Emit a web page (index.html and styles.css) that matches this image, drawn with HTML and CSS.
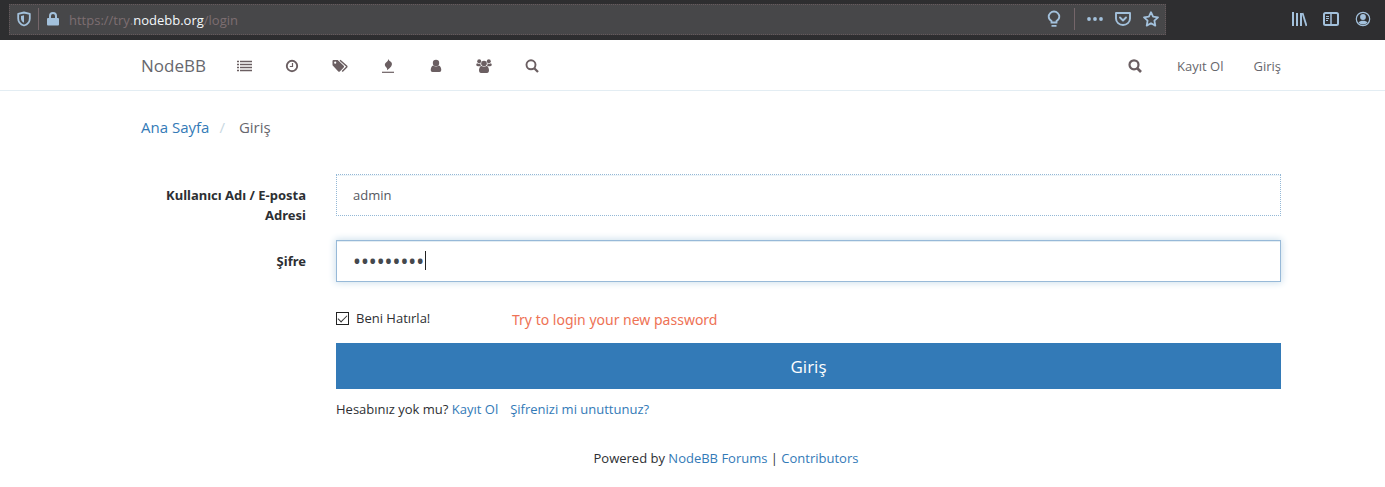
FILE: index.html
```html
<!DOCTYPE html>
<html lang="tr">
<head>
<meta charset="utf-8">
<title>Giriş | NodeBB</title>
<link rel="stylesheet" href="styles.css">
</head>
<body>
<div class="browser">
  <div class="urlbar">
    <svg class="shield" width="14" height="16" viewBox="0 0 14 16"><path d="M7 1.500 12.800 2.800V7.500C12.800 10.800 10.300 13.500 7 14.500 3.700 13.500 1.200 10.800 1.200 7.500V2.800Z" fill="none" stroke="currentColor" stroke-width="1.800" stroke-linejoin="round"/><path d="M7 4.200V11.800C5 10.800 4 9.200 4 7.500V4.900Z" fill="currentColor"/></svg>
    <span class="divider"></span>
    <svg class="lock" width="14" height="16" viewBox="0 0 14 16"><path d="M4 8V5a3 3 0 0 1 6 0v3" fill="none" stroke="currentColor" stroke-width="2"/><rect x="1" y="7" width="12" height="7.500" rx="1" fill="currentColor"/></svg>
    <span class="url">https://try.<b>nodebb.org</b>/login</span>
    <svg class="bulb" width="16" height="18" viewBox="0 0 16 18"><path d="M5.500 12.500V11C3.500 9.800 2.700 8.500 2.700 6.800a5.300 5.300 0 0 1 10.600 0c0 1.700-.8 3-2.800 4.200v1.500ZM5.500 15.800h5" fill="none" stroke="currentColor" stroke-width="1.800"/></svg>
    <span class="divider"></span>
    <svg class="dots" width="16" height="16" viewBox="0 0 16 16" fill="currentColor"><circle cx="2" cy="8" r="1.900"/><circle cx="8" cy="8" r="1.900"/><circle cx="14" cy="8" r="1.900"/></svg>
    <svg class="pocket" width="16" height="16" viewBox="0 0 16 16" fill="none" stroke="currentColor" stroke-width="1.900" stroke-linejoin="round" stroke-linecap="round"><path d="M1 2h14v5.500a7 6.500 0 0 1-14 0ZM5 6.500l3 3 3-3"/></svg>
    <svg class="star" width="16" height="16" viewBox="0 0 16 16"><path d="m8 1.200 2.100 4.500 4.900.6-3.600 3.400.9 4.900L8 12.200l-4.300 2.400.9-4.900L1 6.300l4.900-.6Z" fill="none" stroke="currentColor" stroke-width="1.800" stroke-linejoin="round"/></svg>
  </div>
  <div class="tools">
    <svg width="16" height="16" viewBox="0 0 16 16" stroke="currentColor" stroke-width="2"><path d="M2 1v14M6 2v13M10 2v13" /><path d="m11.500 2 4 13" stroke-width="1.800"/></svg>
    <svg width="16" height="16" viewBox="0 0 16 16"><rect x="1" y="2" width="14" height="12" rx="1.500" fill="none" stroke="currentColor" stroke-width="2"/><path d="M8 2v12" stroke="currentColor" stroke-width="1.500"/><path d="M3 5.500h3M3 7.500h3M3 9.500h2" stroke="currentColor"/></svg>
    <svg width="16" height="16" viewBox="0 0 16 16"><circle cx="8" cy="8" r="6.700" fill="none" stroke="currentColor" stroke-width="1.200"/><circle cx="8" cy="6" r="2.900" fill="currentColor"/><path d="M3.500 11.500C5 9.300 11 9.300 12.500 11.500 10.500 14 5.500 14 3.500 11.500Z" fill="currentColor"/></svg>
  </div>
</div>

<header class="header">
  <nav class="nav">
    <a class="brand" href="#">NodeBB</a>
    <div class="menu">
      <a href="#" aria-label="Kategoriler"><svg width="16" height="14" viewBox="0 0 16 14"><path d="M1 2.500h2M1 5.500h2M1 8.500h2M1 11.500h2M4 2.500H16M4 5.500H16M4 8.500H16M4 11.500H16" stroke="currentColor" stroke-width="1.700"/></svg></a>
      <a href="#" aria-label="Güncel"><svg width="16" height="14" viewBox="0 0 16 14"><circle cx="8" cy="7" r="5.200" fill="none" stroke="currentColor" stroke-width="1.900"/><path d="M8.500 4v3.500H5.800" fill="none" stroke="currentColor" stroke-width="1.200"/></svg></a>
      <a href="#" aria-label="Etiketler"><svg width="16" height="14" viewBox="0 0 16 14"><path d="M.5 2q0-1 1-1h4.200l6 5.800q.8.800 0 1.600l-3.900 4q-.8.600-1.500 0L.5 6.200Z" fill="currentColor"/><circle cx="3.200" cy="3.700" r="1.100" fill="#fff"/><path d="M8 1.200 14.500 7q.6.700 0 1.300l-4.300 4.200" fill="none" stroke="currentColor" stroke-width="1.500"/></svg></a>
      <a href="#" aria-label="Popüler"><svg width="16" height="14" viewBox="0 0 16 14"><path d="M8.500 0q.2 1.600 2 2.600 2.600 2 .6 4.800Q10 9 7 11.200q.6-1.600-.6-2.800Q3.600 6 5.800 3.800 8.200 2 8.500 0Z" fill="currentColor"/><path d="M2 13.300h12" stroke="currentColor" stroke-width="1.200"/></svg></a>
      <a href="#" aria-label="Kullanıcılar"><svg width="16" height="14" viewBox="0 0 16 14" fill="currentColor"><circle cx="8" cy="4" r="3.200"/><path d="M5.200 6.400q2.800 2 5.600 0Q13 7 13.300 11q0 2-1.800 2h-7q-1.800 0-1.800-2Q3 7 5.200 6.400Z"/></svg></a>
      <a href="#" aria-label="Gruplar"><svg width="16" height="14" viewBox="0 0 16 14" fill="currentColor"><circle cx="3.200" cy="2.200" r="2"/><circle cx="12.800" cy="2.200" r="2"/><circle cx="8" cy="4.500" r="2.800"/><path d="M1.200 4.200q2 1 3.200 0-.2 2 .8 3H1.800Q.2 7 .2 5.800.4 4.500 1.200 4.200ZM14.800 4.200q-2 1-3.200 0 .2 2-.8 3h3.400q1.600-.2 1.600-1.400-.2-1.300-1-1.600ZM5.600 7q2.400 1.600 4.800 0 2.300.4 2.600 4 0 3-2 3H5q-2 0-2-3 .3-3.600 2.600-4Z"/></svg></a>
      <a href="#" aria-label="Ara"><svg width="16" height="14" viewBox="0 0 16 14" fill="none" stroke="currentColor"><circle cx="7" cy="5.800" r="4.500" stroke-width="1.900"/><path d="m10 9 4 4" stroke-width="2.300"/></svg></a>
    </div>
    <div class="account">
      <a class="find" href="#" aria-label="Ara"><svg width="16" height="14" viewBox="0 0 16 14" fill="none" stroke="currentColor"><circle cx="7" cy="5.800" r="4.500" stroke-width="2.200"/><path d="m10 9 4 4" stroke-width="2.700"/></svg></a>
      <a href="#">Kayıt Ol</a>
      <a href="#">Giriş</a>
    </div>
  </nav>
</header>

<main class="page">
  <nav class="crumbs"><a href="#">Ana Sayfa</a><span class="slash">/</span><span class="current">Giriş</span></nav>
  <form class="login">
    <label class="label" for="username">Kullanıcı Adı / E-posta Adresi</label>
    <input class="field" id="username" type="text" value="admin">
    <label class="label" for="password">Şifre</label>
    <div class="secret">
      <input class="field field-active" id="password" type="password" value="password1">
      <span class="caret"></span>
    </div>
    <div class="actions">
      <div class="options">
        <label class="remember"><input class="check" type="checkbox" checked>Beni Hatırla!</label>
        <span class="note">Try to login your new password</span>
      </div>
      <button class="submit" type="button">Giriş</button>
      <p class="help"><span>Hesabınız yok mu? <a href="#">Kayıt Ol</a></span><a href="#">Şifrenizi mi unuttunuz?</a></p>
    </div>
  </form>
  <footer class="footer">Powered by <a href="#">NodeBB Forums</a> | <a href="#">Contributors</a></footer>
</main>
</body>
</html>
```
FILE: styles.css
```css
* { box-sizing: border-box; }
body {
  margin: 0;
  background: #fff;
  color: #2d2f33;
  font: 13px/20px "Open Sans", "Noto Sans", sans-serif;
}
a { color: #337ab7; text-decoration: none; }
svg { display: block; flex: none; }

.browser {
  display: flex;
  align-items: center;
  height: 40px;
  padding: 0 14px 2px 9px;
  background: #2e2e30;
  color: #a3c1dc;
}
.urlbar {
  display: flex;
  flex: 1;
  align-items: center;
  height: 31px;
  padding: 0 6px 0 7px;
  background: #474749;
  border: 1px dotted #66595c;
}
.divider { width: 1px; height: 22px; background: #75666a; }
.shield { margin-right: 7px; }
.lock { margin: 0 9px 0 7px; }
.url { flex: 1; padding-top: 2px; color: #7d6e71; }
.url b { color: #f4f8fb; font-weight: 400; }
.bulb { margin-right: 12px; }
.dots { margin: 0 12px; }
.star { margin-left: 12px; }
.tools { display: flex; gap: 16px; margin-left: 125px; }

.header { border-bottom: 1px solid #e3edf3; }
.nav {
  display: flex;
  align-items: center;
  height: 50px;
  padding: 2px 104px 0 141px;
}
.nav a { color: #67676d; }
.nav .brand { width: 95px; font-size: 17px; }
.menu { display: flex; gap: 32px; }
.menu a, .account .find { color: #6b5f62; }
.account { display: flex; align-items: center; gap: 30px; margin-left: auto; }
.account .find { margin-right: 4px; }

.page { padding: 25px 104px 16px 141px; }
.crumbs { font-size: 15px; line-height: 22px; }
.slash { margin: 0 14px 0 10px; color: #c8d8e2; }
.current { color: #67676d; }
.login {
  display: grid;
  grid-template-columns: 165px 1fr;
  column-gap: 30px;
  row-gap: 24px;
  margin-top: 36px;
}
.label {
  height: 42px;
  padding-top: 11px;
  font-family: "Noto Sans", sans-serif;
  font-weight: 700;
  text-align: right;
}
.field {
  display: block;
  width: 100%;
  height: 42px;
  padding: 0 16px;
  border: 1px dotted #94b8d6;
  background: #fff;
  box-shadow: inset 0 1px 0 #edf4f8;
  color: #55575f;
  font: 13px "Open Sans", "Noto Sans", sans-serif;
  outline: 0;
}
.field-active {
  border: 1px solid #97b9d8;
  box-shadow: inset 0 1px 0 #e3edf3, 0 0 7px 1px #cfe0ec;
  color: #45484d;
  font: 21px "Noto Sans", sans-serif;
}
.secret { position: relative; }
.caret { position: absolute; left: 89px; top: 11px; width: 1px; height: 19px; background: #222; }
.actions { grid-column: 2; }
.options { display: flex; align-items: center; }
.remember { display: flex; align-items: center; width: 176px; }
.check {
  appearance: none;
  width: 13px;
  height: 13px;
  margin: 0 7px 0 0;
  border: 1px solid #222;
  background: #fff;
}
.check:checked::before {
  content: "";
  display: block;
  width: 8px;
  height: 4px;
  margin: 2px 0 0 1px;
  border: solid #333;
  border-width: 0 0 1px 1px;
  transform: rotate(-45deg);
}
.note { padding-top: 4px; color: #ee7255; font-family: "Noto Sans", sans-serif; font-size: 14px; }
.submit {
  display: block;
  width: 100%;
  height: 46px;
  margin-top: 13px;
  padding: 0;
  border: 0;
  background: #337ab7;
  color: #fff;
  font: 17px "Open Sans", "Noto Sans", sans-serif;
}
.help { display: flex; gap: 12px; margin: 10px 0 0; }
.footer { margin-top: 29px; padding-left: 30px; text-align: center; }
```
